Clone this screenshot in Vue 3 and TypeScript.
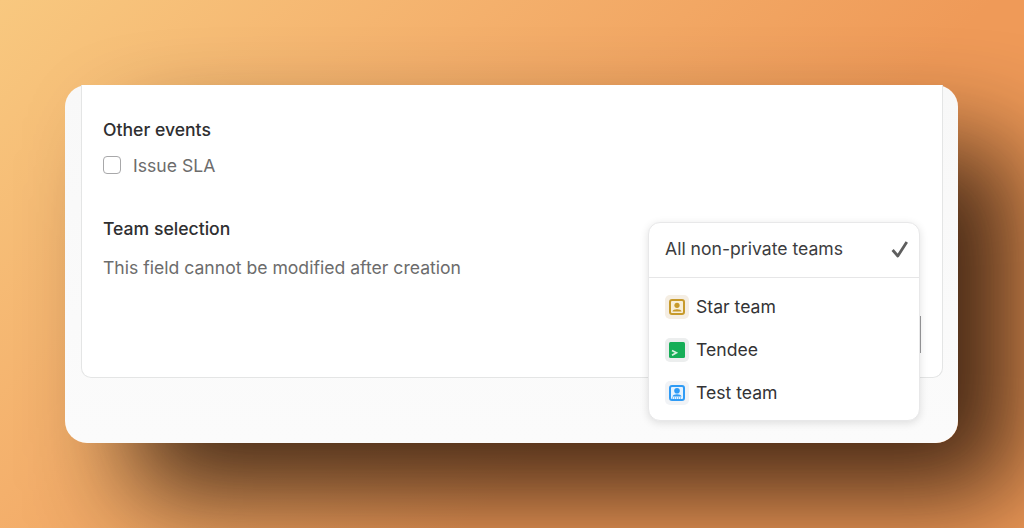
<script setup lang="ts">
interface Team { name: string; tile: string; fg: string; kind: 'person' | 'term' | 'stamp' }
const teams: Team[] = [
  { name: 'Star team', tile: '#f5eee3', fg: '#c79a2b', kind: 'person' },
  { name: 'Tendee', tile: '#eceeee', fg: '#16ae57', kind: 'term' },
  { name: 'Test team', tile: '#f1f3f6', fg: '#2f9bf5', kind: 'stamp' },
]
</script>

<template>
  <div class="stage">
    <section class="window">
      <div class="panel">
        <h3 class="heading">Other events</h3>
        <label class="check">
          <span class="box"></span>
          <span>Issue SLA</span>
        </label>
        <div class="team-row">
          <h3 class="heading">Team selection</h3>
          <p class="hint">This field cannot be modified after creation</p>
        </div>
        <div class="select-edge"></div>
      </div>

      <div class="menu">
        <div class="menu-head">
          <span>All non-private teams</span>
          <svg class="tick" width="18" height="18" viewBox="0 0 18 18" fill="none">
            <path d="M1.6 10 L6.8 16 L15.8 2" stroke="#5e5e5e" stroke-width="2.8" stroke-linejoin="round" />
          </svg>
        </div>
        <ul class="menu-list">
          <li v-for="t in teams" :key="t.name" class="menu-item">
            <span class="tile" :style="{ background: t.tile }">
              <svg width="16" height="16" viewBox="0 0 16 16">
                <template v-if="t.kind === 'person'">
                  <rect x="1" y="1" width="14" height="14" rx="2" fill="#f8efd9" :stroke="t.fg" stroke-width="2" />
                  <circle cx="8" cy="6.3" r="2.6" :fill="t.fg" />
                  <path d="M3.4 12.6 C3.8 9.6 12.2 9.6 12.6 12.6 Z" :fill="t.fg" />
                </template>
                <template v-else-if="t.kind === 'term'">
                  <rect x="0" y="0" width="16" height="16" rx="1.5" :fill="t.fg" />
                  <path d="M3 8.4 L7.4 10.8 L3 13.2" fill="none" stroke="#d8efdf" stroke-width="1.7" />
                </template>
                <template v-else>
                  <rect x="1" y="1" width="14" height="14" rx="2" fill="#e6f3fe" :stroke="t.fg" stroke-width="2" />
                  <circle cx="8" cy="5.8" r="2.8" :fill="t.fg" />
                  <path d="M3.4 11.4 C4.2 8.4 11.8 8.4 12.6 11.4 Z" :fill="t.fg" />
                  <path d="M3 13 H13" :stroke="t.fg" stroke-width="1.2" stroke-dasharray="1 1" />
                </template>
              </svg>
            </span>
            <span>{{ t.name }}</span>
          </li>
        </ul>
      </div>
    </section>
  </div>
</template>

<style>
html, body { margin: 0; padding: 0; }
</style>

<style scoped>
.stage {
  width: 1024px;
  height: 528px;
  box-sizing: border-box;
  padding: 85px 66px 85px 65px;
  overflow: hidden;
  background: linear-gradient(135deg, #f8c87f 0%, #f4b06c 32%, #ef9a58 64%, #ef9a58 100%);
  font-family: Inter, "Liberation Sans", sans-serif;
}
.window {
  position: relative;
  height: 358px;
  box-sizing: border-box;
  padding: 0 15px 65px 16px;
  background: linear-gradient(180deg, #f8f8f8 0%, #fbfbfb 100%);
  border-radius: 22px;
  box-shadow: 62px 56px 100px -6px rgba(35, 18, 8, 0.85);
}
.panel {
  position: relative;
  height: 293px;
  box-sizing: border-box;
  padding: 34px 21px 0;
  background: #fff;
  border: 1px solid #e4e5e5;
  border-top: none;
  border-radius: 0 0 10px 10px;
}
.heading {
  margin: 0;
  font-size: 17.6px;
  line-height: 22px;
  font-weight: 500;
  color: #2f2f31;
}
.check {
  display: flex;
  align-items: center;
  gap: 12px;
  margin-top: 11px;
  height: 26px;
  font-size: 17.6px;
  color: #6c6c6c;
}
.box {
  flex: none;
  width: 16px;
  height: 16px;
  border: 1.5px solid #a8a8aa;
  border-radius: 4px;
}
.team-row { margin-top: 40px; }
.hint {
  margin: 17px 0 0;
  font-size: 17.6px;
  line-height: 22px;
  color: #6c6c6c;
}
.select-edge {
  position: absolute;
  right: 21px;
  top: 231px;
  width: 2px;
  height: 37px;
  background: #9a9a9c;
}
.menu {
  position: absolute;
  left: 583px;
  top: 137px;
  width: 272px;
  height: 199px;
  box-sizing: border-box;
  background: #fff;
  border: 1px solid #e8e8e9;
  border-radius: 12px;
  box-shadow: 0 2px 8px rgba(0, 0, 0, 0.12);
}
.menu-head {
  display: flex;
  align-items: center;
  justify-content: space-between;
  height: 55px;
  box-sizing: border-box;
  padding: 0 10px 4px 16px;
  border-bottom: 1px solid #e6e6e7;
  font-size: 17.6px;
  color: #3c3c3e;
}
.tick { position: relative; top: 1px; }
.menu-list {
  list-style: none;
  margin: 0;
  padding: 7px 0 0 16px;
}
.menu-item {
  display: flex;
  align-items: center;
  gap: 7px;
  height: 43px;
  font-size: 17.6px;
  color: #333335;
}
.tile {
  display: flex;
  align-items: center;
  justify-content: center;
  width: 24px;
  height: 24px;
  border-radius: 5px;
}
</style>
